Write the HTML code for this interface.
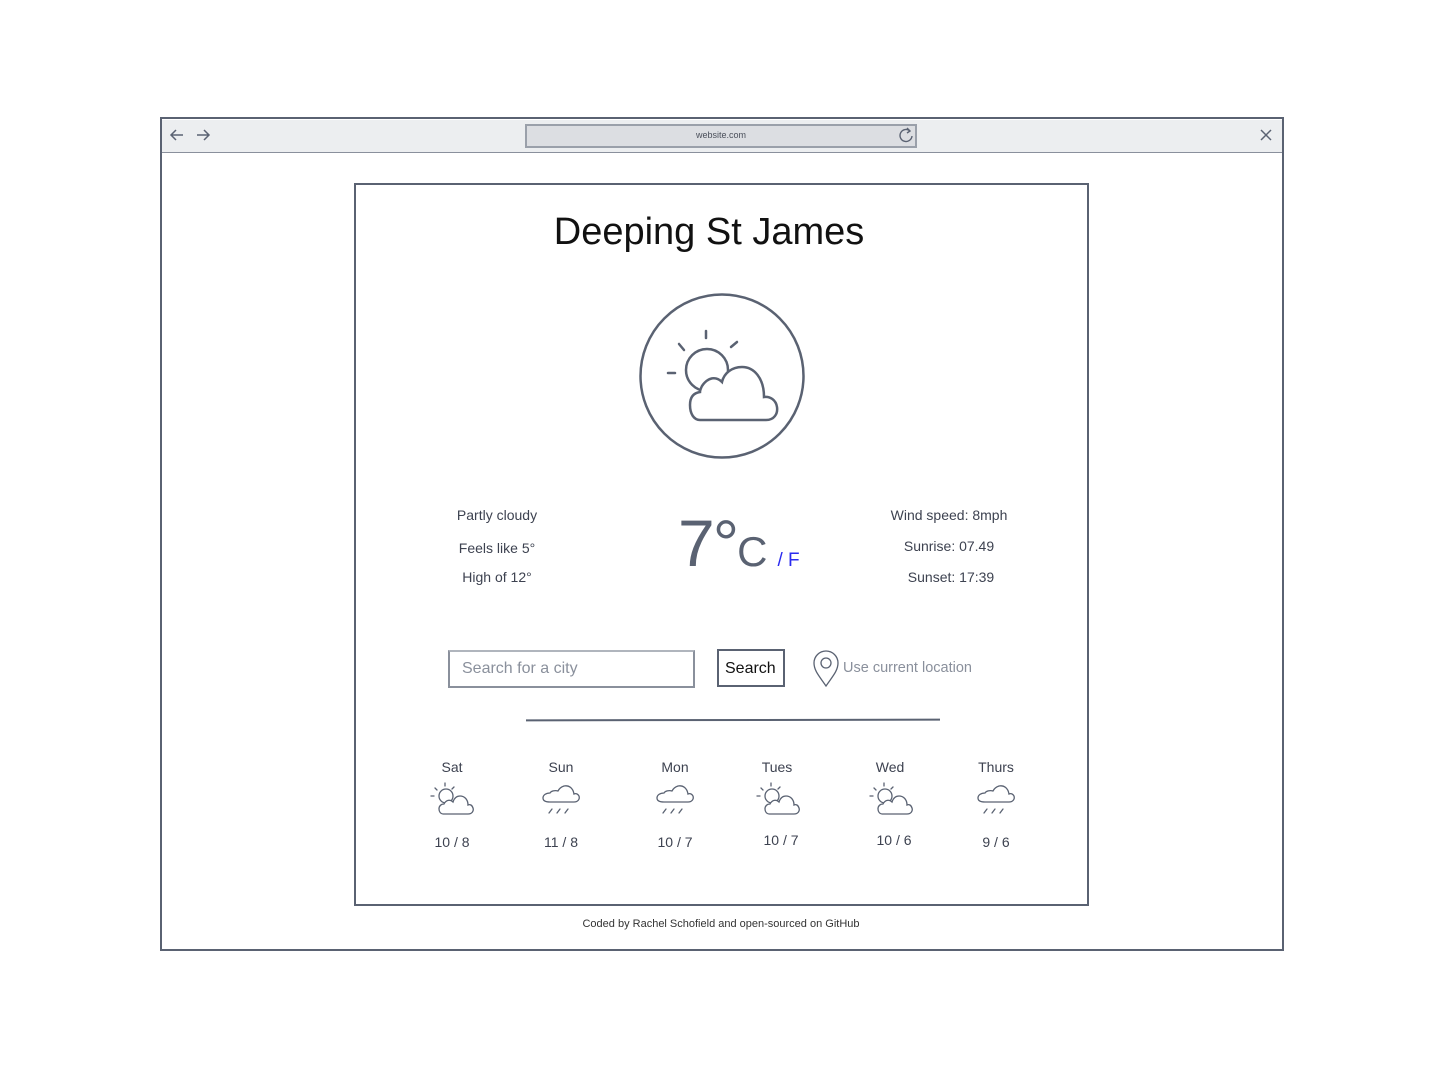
<!DOCTYPE html>
<html><head><meta charset="utf-8"><style>
*{margin:0;padding:0;box-sizing:border-box}
body{width:1443px;height:1068px;background:#fff;position:relative;font-family:"Liberation Sans",sans-serif;color:#3d4250;overflow:hidden}
.a{position:absolute}
.t{position:absolute;white-space:nowrap;transform:translateX(-50%);font-size:14px}
</style></head><body>
<div class="a" style="left:160px;top:117px;width:1124px;height:834px;border:2.5px solid #5a6272"></div>
<div class="a" style="left:162px;top:120px;width:1120px;height:33px;background:#eceef0;border-bottom:1.5px solid #8a909c"></div>
<svg class="a" style="left:166px;top:126px" width="50" height="18" viewBox="0 0 50 18" fill="none" stroke="#5a6272" stroke-width="1.5"><path d="M17 9H5M10 4L5 9l5 5"/><path d="M31 9h12M38 4l5 5-5 5"/></svg>
<div class="a" style="left:525px;top:124px;width:392px;height:24px;background:#dcdee2;border:2px solid #9aa0aa"></div>
<div class="t" style="left:721px;top:130px;font-size:9px;color:#4a4f5a">website.com</div>
<svg class="a" style="left:897px;top:126px" width="18" height="18" viewBox="0 0 18 18" fill="none" stroke="#5a6272" stroke-width="1.4"><path d="M13 5A6 6 0 1 0 15 10"/><path d="M10 2l3 3-3 2"/></svg>
<svg class="a" style="left:1259px;top:128px" width="14" height="14" viewBox="0 0 14 14" stroke="#5a6272" stroke-width="1.5"><path d="M2 2l10 10M12 2L2 12"/></svg>
<div class="a" style="left:354px;top:183px;width:735px;height:723px;border:2.5px solid #5a6272"></div>
<div class="t" style="left:709px;top:211px;font-size:38px;color:#111">Deeping St James</div>
<svg class="a" style="left:636px;top:290px" width="172" height="172" viewBox="0 0 172 172" fill="none" stroke="#5a6272" stroke-width="2.5" stroke-linecap="round">
<circle cx="86" cy="86" r="81.5"/>
<path d="M70 41v7M43 54l5 6M101 52l-6 5M32 83h7"/>
<circle cx="71" cy="80" r="21"/>
<path fill="#fff" d="M64 130H130C138 130 142 124 141 117C140 110 134 106 128 107C128 88 118 77 106 77C96 77 88 83 86 92C80 86 72 87 66 96C64 100 64 102 64 102C57 103 54 108 54 115C54 124 58 130 64 130Z"/>
</svg>
<div class="t" style="left:497px;top:507px">Partly cloudy</div>
<div class="t" style="left:497px;top:540px">Feels like 5°</div>
<div class="t" style="left:497px;top:569px">High of 12°</div>
<div class="t" style="left:949px;top:507px">Wind speed: 8mph</div>
<div class="t" style="left:949px;top:538px">Sunrise: 07.49</div>
<div class="t" style="left:951px;top:569px">Sunset: 17:39</div>
<div class="a" style="left:678px;top:505px;font-size:66px;color:#5a6272;white-space:nowrap;letter-spacing:-2px">7°<span style="font-size:42px;letter-spacing:0">C</span><span style="font-size:19px;color:#2b2bef;letter-spacing:0;margin-left:10px">/ F</span></div>
<div class="a" style="left:448px;top:650px;width:247px;height:38px;border:2px solid #8a909c;border-top-color:#b0b5bd"></div>
<div class="a" style="left:462px;top:660px;font-size:16px;color:#8a909c">Search for a city</div>
<div class="a" style="left:717px;top:649px;width:68px;height:38px;border:2px solid #5a6272"></div>
<div class="a" style="left:725px;top:660px;font-size:16px;color:#111">Search</div>
<svg class="a" style="left:812px;top:650px" width="28" height="38" viewBox="0 0 28 38" fill="none" stroke="#5a6272" stroke-width="1.3"><path d="M14 36C8 27 2 21 2 13A12 12 0 0 1 26 13C26 21 20 27 14 36z"/><circle cx="14" cy="13" r="5"/></svg>
<div class="a" style="left:843px;top:660px;font-size:14.5px;color:#8a909c">Use current location</div>
<div class="a" style="left:526px;top:719px;width:414px;height:1.5px;background:#5a6272;transform:rotate(-0.1deg)"></div>
<svg width="0" height="0" style="position:absolute"><defs>
<symbol id="pc" viewBox="0 0 44 36"><g fill="none" stroke="#5a6272" stroke-width="1.3" stroke-linecap="round"><path d="M15 2v3M5 7l2 2M24 6l-2 2M1 15h3"/><circle cx="16" cy="15" r="7"/><path fill="#fff" d="M13 33h25c4 0 6-3 5-6-1-3-3-4-5-3 0-6-4-9-8-9-4 0-6 3-7 6-3-3-7-2-9 2-3 0-5 2-5 5s2 5 4 5z"/></g></symbol>
<symbol id="rn" viewBox="0 0 40 36"><g fill="none" stroke="#5a6272" stroke-width="1.3" stroke-linecap="round"><path d="M8 21h24c4 0 6-3 5-6-1-2-3-3-5-2-1-6-5-9-10-8-3 1-5 3-6 5-3-1-7 0-8 2-4 0-7 2-7 5 0 3 3 4 7 4z"/><path d="M7 32l3-4M15 32l3-4M23 32l3-4"/></g></symbol>
</defs></svg>
<div class="t" style="left:452px;top:759px">Sat</div><svg class="a" style="left:430px;top:781px" width="44" height="36"><use href="#pc"/></svg><div class="t" style="left:452px;top:834px">10 / 8</div>
<div class="t" style="left:561px;top:759px">Sun</div><svg class="a" style="left:542px;top:781px" width="40" height="36"><use href="#rn"/></svg><div class="t" style="left:561px;top:834px">11 / 8</div>
<div class="t" style="left:675px;top:759px">Mon</div><svg class="a" style="left:656px;top:781px" width="40" height="36"><use href="#rn"/></svg><div class="t" style="left:675px;top:834px">10 / 7</div>
<div class="t" style="left:777px;top:759px">Tues</div><svg class="a" style="left:756px;top:781px" width="44" height="36"><use href="#pc"/></svg><div class="t" style="left:781px;top:832px">10 / 7</div>
<div class="t" style="left:890px;top:759px">Wed</div><svg class="a" style="left:869px;top:781px" width="44" height="36"><use href="#pc"/></svg><div class="t" style="left:894px;top:832px">10 / 6</div>
<div class="t" style="left:996px;top:759px">Thurs</div><svg class="a" style="left:977px;top:781px" width="40" height="36"><use href="#rn"/></svg><div class="t" style="left:996px;top:834px">9 / 6</div>
<div class="t" style="left:721px;top:918px;font-size:11px;color:#333">Coded by Rachel Schofield and open-sourced on GitHub</div>
</body></html>
